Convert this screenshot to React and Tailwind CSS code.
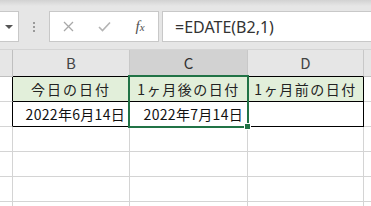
import React from "react";

const jp = { fontFamily: '"Noto Sans CJK JP", "Noto Sans", sans-serif' };

const Toolbar = () => {
  return (
    <div className="h-[49px] flex items-start pt-[11px] bg-[linear-gradient(#d2d2d2,#e6e6e6_6px)]">
      {/* name box, cut off on the left */}
      <div className="w-[19px] h-[31px] bg-white border border-l-0 border-[#c8c8c8] flex items-center">
        <div className="ml-[5px] w-0 h-0 border-l-[4px] border-r-[4px] border-t-[4px] border-l-transparent border-r-transparent border-t-[#555]"></div>
      </div>
      {/* grip dots */}
      <div className="ml-[14px] h-[31px] flex flex-col justify-center gap-[2px]">
        <div className="w-[2px] h-[2px] bg-[#9a9a9a]"></div>
        <div className="w-[2px] h-[2px] bg-[#9a9a9a]"></div>
        <div className="w-[2px] h-[2px] bg-[#9a9a9a]"></div>
      </div>
      {/* cancel / enter / fx */}
      <div className="ml-[14px] w-[110px] h-[31px] bg-white border border-[#c8c8c8] flex items-center">
        <div className="w-[36px] flex justify-center">
          <svg width="11" height="11" viewBox="0 0 11 11">
            <path d="M1 1L10 10M10 1L1 10" stroke="#a8a8a8" strokeWidth="1.3" fill="none" />
          </svg>
        </div>
        <div className="w-[36px] flex justify-center">
          <svg width="13" height="11" viewBox="0 0 13 11">
            <path d="M1 6L4.5 9.5L12 1.5" stroke="#b4b4b4" strokeWidth="1.6" fill="none" />
          </svg>
        </div>
        <div className="w-[36px] flex justify-center items-baseline text-[#505050] italic" style={{ fontFamily: '"Liberation Serif", serif' }}>
          <span className="text-[15px] leading-none">f</span>
          <span className="text-[11px] leading-none">x</span>
        </div>
      </div>
      {/* formula input */}
      <div className="ml-[3px] flex-1 h-[31px] bg-white border border-r-0 border-[#c8c8c8] flex items-center pl-[12px]">
        <span className="text-[16px] text-[#333]" style={{ fontFamily: '"Noto Sans", "Liberation Sans", sans-serif' }}>
          =EDATE(B2,1)
        </span>
      </div>
    </div>
  );
};

export default function App() {
  const rows = [0, 1, 2, 3];
  return (
    <div className="w-[371px] h-[206px] overflow-hidden bg-white relative" style={jp}>
      <Toolbar />

      {/* column headers */}
      <div className="flex h-[28px] border-t border-[#d4d4d4] bg-[#e6e6e6] text-[15px] text-[#444]">
        <div className="w-[13px] shrink-0 border-r border-b border-[#bfbfbf]"></div>
        <div className="w-[117px] shrink-0 border-r border-[#c8c8c8] border-b border-b-black flex items-center justify-center">B</div>
        <div className="w-[118px] shrink-0 border-r border-[#c8c8c8] bg-[#d2d2d2] border-b border-b-[#217346] flex items-center justify-center text-[#333]">C</div>
        <div className="w-[116px] shrink-0 border-r border-[#c8c8c8] border-b border-b-black flex items-center justify-center">D</div>
        <div className="flex-1 border-b border-[#bfbfbf]"></div>
      </div>

      {/* header row of the table */}
      <div className="flex h-[25px] text-[14px] text-[#222]">
        <div className="w-[13px] shrink-0 border-r border-r-black border-b border-[#d4d4d4]"></div>
        <div className="w-[117px] shrink-0 bg-[#e2efda] border-r border-b border-black flex items-center justify-center tracking-[2px]">今日の日付</div>
        <div className="w-[118px] shrink-0 bg-[#e2efda] border-r border-b border-black flex items-center justify-center tracking-[1.5px]">1ヶ月後の日付</div>
        <div className="w-[116px] shrink-0 bg-[#e2efda] border-r border-b border-black flex items-center justify-center tracking-[1.5px]">1ヶ月前の日付</div>
        <div className="flex-1 border-b border-[#d4d4d4]"></div>
      </div>

      {/* data row */}
      <div className="flex h-[25px] text-[14px] text-[#111]">
        <div className="w-[13px] shrink-0 border-r border-r-black border-b border-[#d4d4d4]"></div>
        <div className="w-[117px] shrink-0 border-r border-b border-black flex items-center justify-end pr-[4px] tracking-[0.3px]">2022年6月14日</div>
        <div className="w-[118px] shrink-0 border-r border-b border-black flex items-center justify-end pr-[4px] tracking-[0.3px]">2022年7月14日</div>
        <div className="w-[116px] shrink-0 border-r border-b border-black"></div>
        <div className="flex-1 border-b border-[#d4d4d4]"></div>
      </div>

      {/* empty rows */}
      {rows.map((r) => (
        <div key={r} className="flex h-[25px]">
          <div className="w-[13px] shrink-0 border-r border-b border-[#d4d4d4]"></div>
          <div className="w-[117px] shrink-0 border-r border-b border-[#d4d4d4]"></div>
          <div className="w-[118px] shrink-0 border-r border-b border-[#d4d4d4]"></div>
          <div className="w-[116px] shrink-0 border-r border-b border-[#d4d4d4]"></div>
          <div className="flex-1 border-b border-[#d4d4d4]"></div>
        </div>
      ))}

      {/* selection outline and fill handle */}
      <div className="absolute left-[128px] top-[75px] w-[121px] h-[53px] border-2 border-[#217346]"></div>
      <div className="absolute left-[244px] top-[123px] w-[7px] h-[7px] bg-[#217346] border border-white"></div>
    </div>
  );
}
